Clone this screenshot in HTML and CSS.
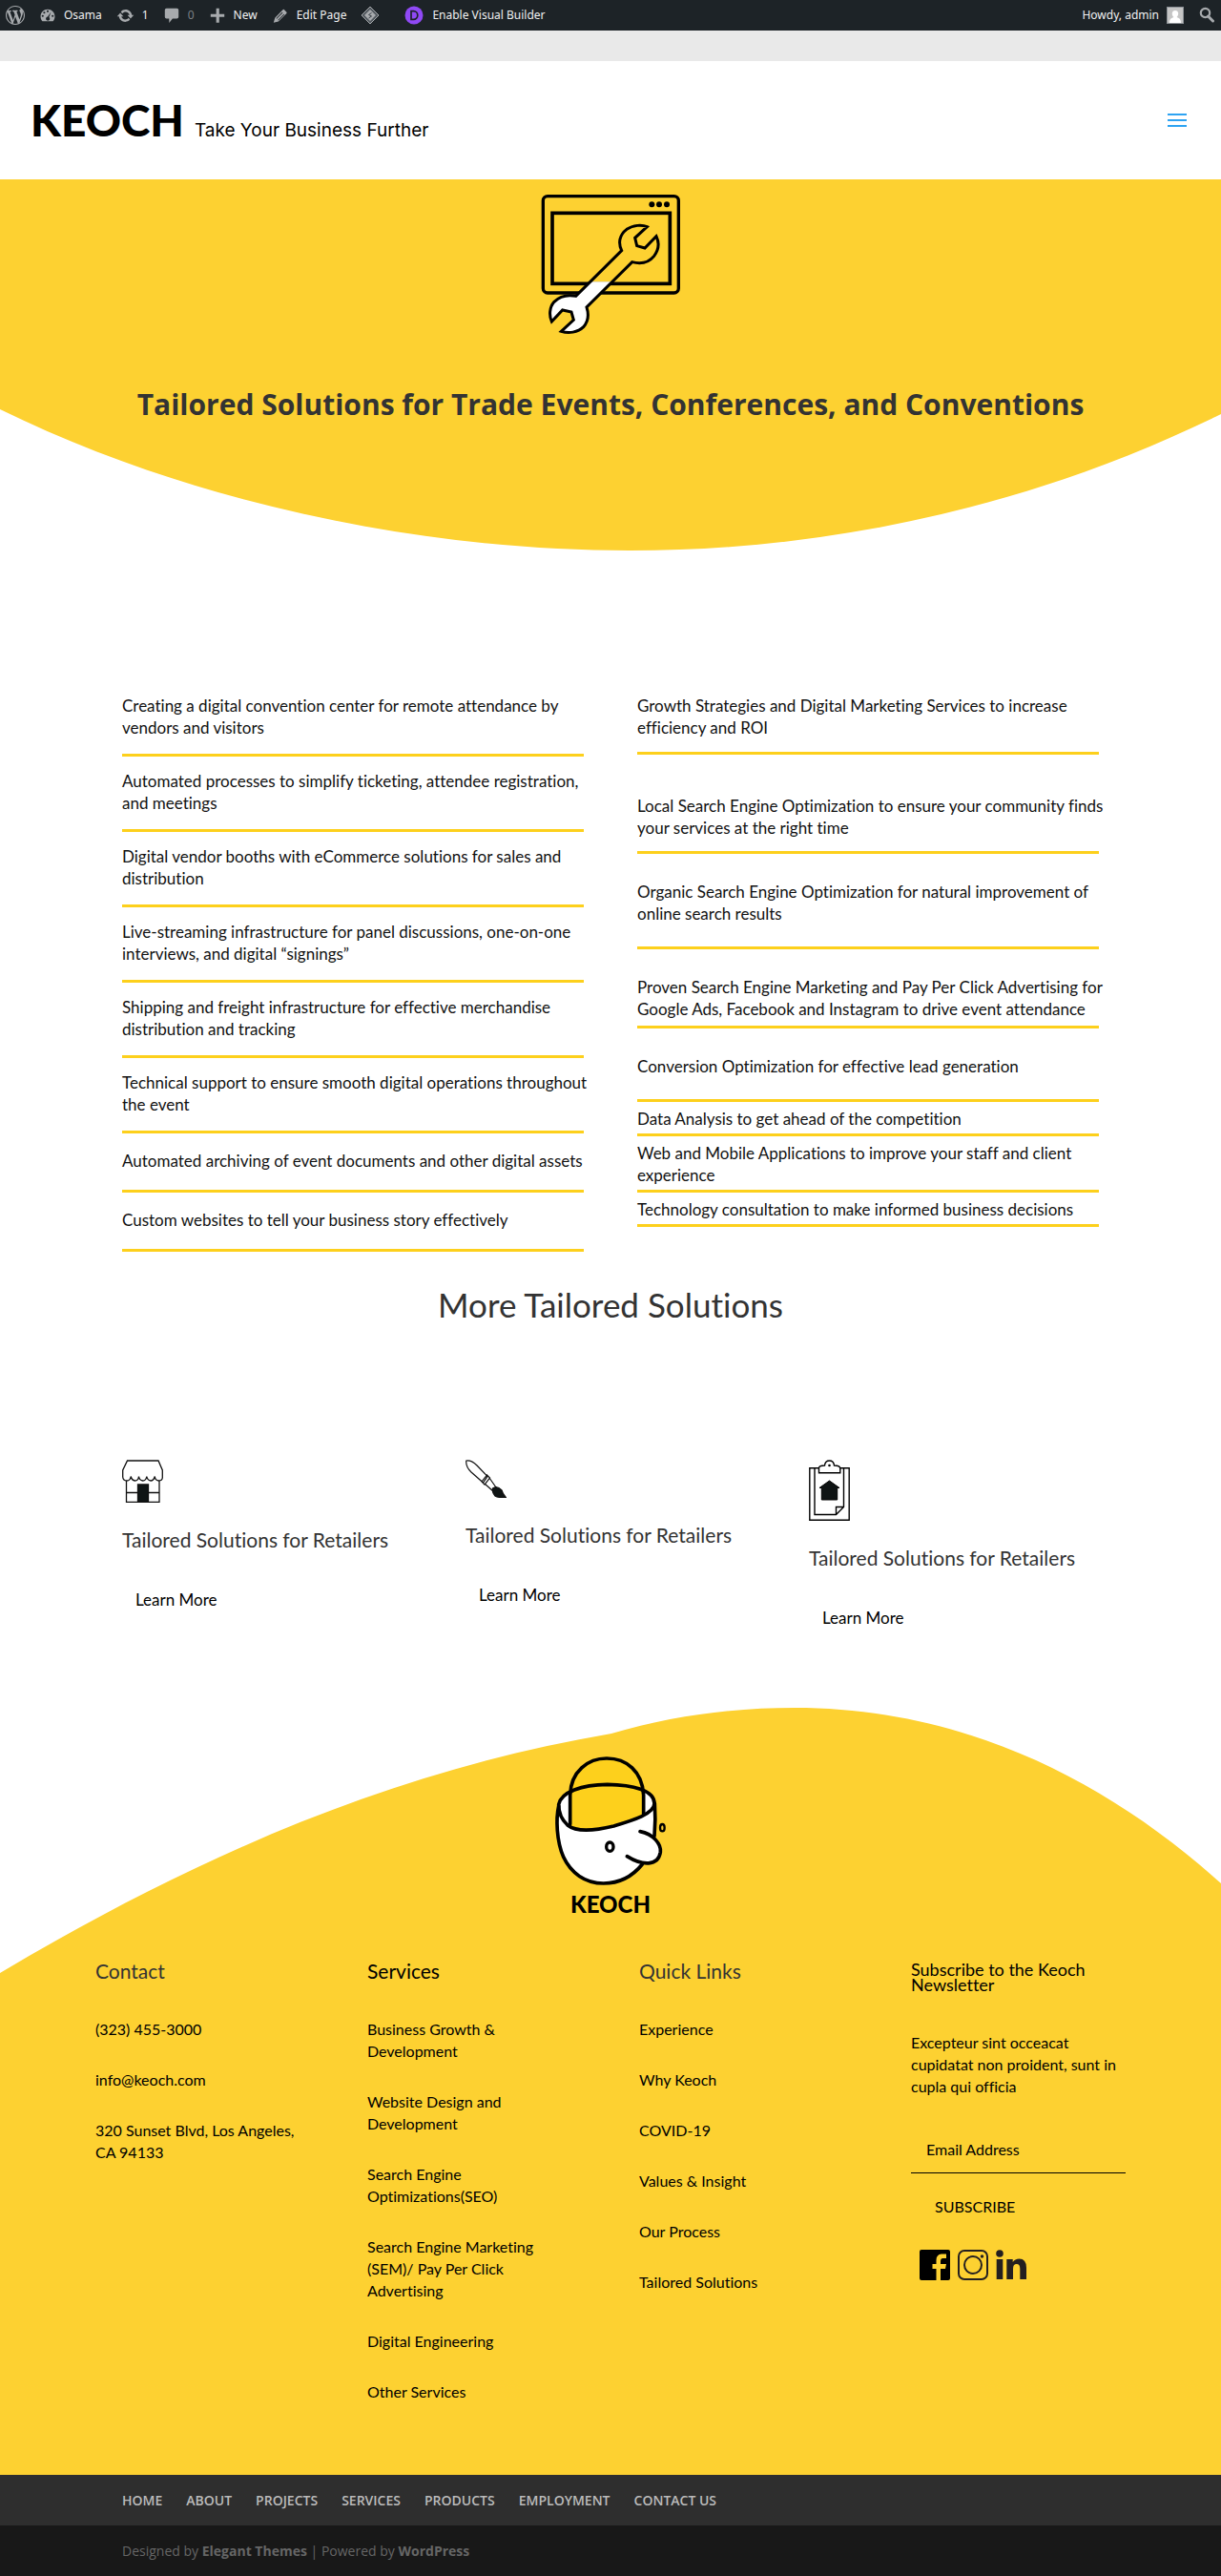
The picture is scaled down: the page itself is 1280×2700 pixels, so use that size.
FILE: index.html
```html
<!DOCTYPE html>
<html lang="en">
<head>
<meta charset="utf-8">
<meta name="viewport" content="width=device-width, initial-scale=1">
<title>Tailored Solutions - Keoch</title>
<link rel="stylesheet" href="styles.css">
</head>
<body>
<div class="adminbar">
  <a href="#" class="ab-item ab-wp" aria-label="About WordPress"><svg width="20" height="20" viewBox="0 0 20 20"><path fill="currentColor" d="M20 10c0-5.51-4.49-10-10-10C4.48 0 0 4.49 0 10c0 5.52 4.48 10 10 10 5.51 0 10-4.48 10-10zM7.78 15.37L4.37 6.22c.55-.02 1.17-.08 1.17-.08.5-.06.44-1.13-.06-1.11 0 0-1.45.11-2.37.11-.18 0-.37 0-.58-.01C4.12 2.69 6.87 1.11 10 1.11c2.33 0 4.45.87 6.05 2.34-.68-.11-1.65.39-1.65 1.58 0 .74.45 1.36.9 2.1.35.61.55 1.36.55 2.46 0 1.49-1.4 5-1.4 5l-3.03-8.37c.54-.02.82-.17.82-.17.5-.05.44-1.25-.06-1.22 0 0-1.44.12-2.38.12-.87 0-2.33-.12-2.33-.12-.5-.03-.56 1.2-.06 1.22l.92.08 1.26 3.41zM17.41 10c.24-.64.74-1.87.43-4.25.7 1.29 1.05 2.71 1.05 4.25 0 3.29-1.73 6.24-4.4 7.78.97-2.59 1.94-5.2 2.92-7.78zM6.1 18.09C3.12 16.65 1.11 13.53 1.11 10c0-1.3.23-2.48.72-3.59C3.25 10.3 4.67 14.2 6.1 18.09zm4.03-6.63l2.58 6.98c-.86.29-1.76.45-2.71.45-.79 0-1.57-.11-2.29-.33.81-2.38 1.62-4.74 2.42-7.1z"/></svg></a>
  <a href="#" class="ab-item"><svg width="18" height="18" viewBox="0 0 20 20"><path fill="currentColor" fill-rule="evenodd" d="M3.8 17h12.4c1.3-1.5 2.1-3.500 2.100-5.600C18.300 6.700 14.600 3 10 3S1.700 6.700 1.700 11.400C1.700 13.500 2.500 15.500 3.800 17zM10 4.200a1.200 1.200 0 1 1 0 2.400a1.200 1.200 0 0 1 0-2.400zM6 5.700a1.200 1.200 0 1 1 0 2.400a1.200 1.200 0 0 1 0-2.400zM4.200 9.600a1.200 1.200 0 1 1 0 2.400a1.200 1.200 0 0 1 0-2.400zM15.800 9.600a1.200 1.200 0 1 1 0 2.400a1.200 1.200 0 0 1 0-2.400zM13.800 6l-2.200 6.200a2.300 2.300 0 1 1-1.600-.5z"/></svg>Osama</a>
  <a href="#" class="ab-item"><svg width="19" height="19" viewBox="0 0 20 20"><path fill="currentColor" d="M10.200 3.280c3.530 0 6.430 2.610 6.920 6h2.080l-3.500 4-3.500-4h2.320c-.45-1.970-2.210-3.450-4.320-3.450-1.450 0-2.730.71-3.540 1.780L4.950 5.660C6.230 4.200 8.110 3.280 10.200 3.280zM9.800 16.720c-3.520 0-6.430-2.610-6.920-6H.8l3.500-4c1.170 1.330 2.330 2.670 3.500 4H5.480c.45 1.970 2.210 3.450 4.320 3.450 1.450 0 2.730-.71 3.540-1.780l1.710 1.950c-1.280 1.460-3.150 2.380-5.250 2.380z"/></svg>1</a>
  <a href="#" class="ab-item ab-dim"><svg width="18" height="18" viewBox="0 0 20 20"><path fill="currentColor" d="M4 2h12a2 2 0 0 1 2 2v8a2 2 0 0 1-2 2h-5l-4 5v-5H4a2 2 0 0 1-2-2V4a2 2 0 0 1 2-2z"/></svg>0</a>
  <a href="#" class="ab-item"><svg width="18" height="18" viewBox="0 0 20 20"><path fill="currentColor" d="M8.500 2h3.500v6.500H18V12h-6v6.500H8.500V12H2V8.500h6.500z"/></svg>New</a>
  <a href="#" class="ab-item"><svg width="18" height="18" viewBox="0 0 20 20"><path fill="currentColor" fill-rule="evenodd" d="M13.900 3.100l3 3c.7.700.7 1.300 0 2l-9.200 9L2 18.500l1.600-5.500 8.900-9.200c.6-.6 1-.8 1.400-.7zM12 6.500l-7 7 .7.700 7-7zM14 8.500l-7 7 .7.700 7-7z"/></svg>Edit Page</a>
  <a href="#" class="ab-item" aria-label="Layouts"><svg width="20" height="20" viewBox="0 0 20 20"><path fill="#50575d" stroke="currentColor" stroke-width="1" d="M10 1l9 9-9 9-9-9z"/><path fill="currentColor" d="M10 4l6 6-6 6-6-6z"/><path d="M11.500 7.500L8.500 9.500l3 1.500-3 2" fill="none" stroke="#3c434a"/></svg></a>
  <a href="#" class="ab-item ab-divi"><svg width="20" height="20" viewBox="0 0 20 20"><circle cx="10" cy="10" r="9.500" fill="#9049f5"/><path d="M7 5.700h2.500a4.300 4.300 0 0 1 0 8.600H7z" fill="none" stroke="#1d2327" stroke-width="1.700"/></svg>Enable Visual Builder</a>
  <a href="#" class="ab-item ab-right">Howdy, admin<svg width="18" height="18" viewBox="0 0 18 18"><path d="M0 0h18v18H0z" fill="#8c9196"/><path d="M1 1h16v16H1z" fill="#c5c5c5"/><path d="M9 4c4 0 4 5 1.500 7C14 12 15 14 15 17H3c0-3 1-5 4.500-6C5 9 5 4 9 4z" fill="#fff"/></svg></a>
  <a href="#" class="ab-item" aria-label="Search"><svg width="18" height="18" viewBox="0 0 18 18" fill="none" stroke="currentColor"><circle cx="7.500" cy="6.500" r="4.700" stroke-width="2.200"/><path d="M10.500 10l5 5" stroke-width="3" stroke-linecap="round"/></svg></a>
</div>
<div class="topstrip"></div>
<header class="site-header">
  <a href="#" class="brand"><span class="wordmark">KEOCH</span><span class="tagline">Take Your Business Further</span></a>
  <button class="menu" aria-label="Menu"><svg width="20" height="14" viewBox="0 0 20 14"><path d="M0 1h20M0 7h20M0 13h20" stroke="#2ea3f2" stroke-width="2"/></svg></button>
</header>
<main>
  <section class="hero">
    <svg class="backdrop" viewBox="0 0 1280 389" preserveAspectRatio="none"><path fill="#fdd131" d="M0 0H1280V246C1090 339 880 389 660 389C440 389 200 339 0 241z"/></svg>
    <svg class="hero-icon" width="147" height="148" viewBox="80 40 441 444" stroke="#000" fill="none">
      <rect x="87" y="48" width="426" height="304" rx="14" stroke-width="10"/>
      <rect x="116" y="101" width="370" height="222" stroke-width="11"/>
      <g fill="#000" stroke="none"><circle cx="429" cy="74" r="9"/><circle cx="452" cy="74" r="9"/><circle cx="476" cy="74" r="9"/></g>
      <path fill="#fdd131" stroke="none" d="M414 144C398 137 370 138 350 152C326 170 323 196 334 219L238 317H302L367 255C395 262 420 256 436 236C452 215 452 193 443 174L407 211L382 204L376 179z"/>
      <path fill="#fff" stroke="none" d="M238 317H302L224 397C231 419 230 441 214 459C196 477 167 480 144 473L183 437L176 412L148 406L114 442C106 424 106 398 122 380C140 362 165 357 190 362z"/>
      <path stroke-width="9" d="M414 144C398 137 370 138 350 152C326 170 323 196 334 219L190 362C165 357 140 362 122 380C106 398 106 424 114 442L148 406L176 412L183 437L144 473C167 480 196 477 214 459C230 441 231 419 224 397L367 255C395 262 420 256 436 236C452 215 452 193 443 174L407 211L382 204L376 179z"/>
    </svg>
    <h1>Tailored Solutions for Trade Events, Conferences, and Conventions</h1>
  </section>
  <section class="lists">
    <ul class="list">
      <li><p>Creating a digital convention center for remote attendance by vendors and visitors</p></li>
      <li><p>Automated processes to simplify ticketing, attendee registration, and meetings</p></li>
      <li><p>Digital vendor booths with eCommerce solutions for sales and distribution</p></li>
      <li><p>Live-streaming infrastructure for panel discussions, one-on-one interviews, and digital “signings”</p></li>
      <li><p>Shipping and freight infrastructure for effective merchandise distribution and tracking</p></li>
      <li><p>Technical support to ensure smooth digital operations throughout the event</p></li>
      <li class="single"><p>Automated archiving of event documents and other digital assets</p></li>
      <li class="single"><p>Custom websites to tell your business story effectively</p></li>
    </ul>
    <ul class="list">
      <li class="snug"><p>Growth Strategies and Digital Marketing Services to increase efficiency and ROI</p></li>
      <li class="spaced"><p>Local Search Engine Optimization to ensure your community finds your services at the right time</p></li>
      <li class="roomy"><p>Organic Search Engine Optimization for natural improvement of online search results</p></li>
      <li class="low"><p>Proven Search Engine Marketing and Pay Per Click Advertising for Google Ads, Facebook and Instagram to drive event attendance</p></li>
      <li class="roomy"><p>Conversion Optimization for effective lead generation</p></li>
      <li class="tight"><p>Data Analysis to get ahead of the competition</p></li>
      <li class="tight"><p>Web and Mobile Applications to improve your staff and client experience</p></li>
      <li class="tight"><p>Technology consultation to make informed business decisions</p></li>
    </ul>
  </section>
  <h2 class="more">More Tailored Solutions</h2>
  <section class="cards">
    <article class="card">
      <svg width="43" height="45" viewBox="0 0 43 45" fill="none" stroke="#111" stroke-width="1.300"><path d="M5.500 1H38L42.300 11V19Q42 22 38.300 22Q34.500 21.500 34.300 17.500Q33 22 30 22Q26.500 21.500 25.800 17.500Q25 22 21.700 22Q18 21.500 17.500 17.500Q17 22 13.500 22Q10 21.500 9.200 17.500Q8.500 22 5 22Q1 22 .7 18V11zM4.500 22V44.300H39V22M4.500 34.500H39"/><path fill="#0f1414" d="M16.500 26H27.500V44H16.500z"/></svg>
      <h3>Tailored Solutions for Retailers</h3><a href="#" class="learn">Learn More</a>
    </article>
    <article class="card">
      <svg width="43" height="40" viewBox="0 0 43 40" fill="none" stroke="#111" stroke-width="1.200"><path d="M.8 1Q6 0 12 6L23 17.500L18.500 24L6 13Q0 7 .8 1zM23 17.500L20.500 21L18.500 24M25 19.500L20.500 25.500M22.500 16L25.500 19L20 26L17 23zM25 19L32 29M20.500 25.500L29 33"/><path fill="#0f1414" d="M28.500 30Q33 26.500 38 32Q39 36 42.300 39.500Q34 40 31 38Q27.500 34 28.500 30z"/></svg>
      <h3>Tailored Solutions for Retailers</h3><a href="#" class="learn">Learn More</a>
    </article>
    <article class="card">
      <svg width="43" height="64" viewBox="0 0 43 64" fill="none" stroke="#000" stroke-width="1.400"><path d="M.8 8.700H42.200V63.300H.8zM6 8.700V57.500H28.500L36.500 49.500V8.700M28.500 57.500V49.500H36.500"/><path fill="#fff" d="M10.500 13.700V8.500Q11 6 16.500 6Q17 1 21.500 1Q26 1 26.500 6Q32 6 32.800 8.500V13.700z"/><circle cx="21.500" cy="6" r=".6"/><path fill="#0f1414" stroke-width="1" d="M21.500 22L32 29.500H29.700V42H13.300V29.500H11z"/></svg>
      <h3>Tailored Solutions for Retailers</h3><a href="#" class="learn">Learn More</a>
    </article>
  </section>
</main>
<footer>
  <section class="footer-main">
    <svg class="backdrop" viewBox="0 0 1280 804" preserveAspectRatio="none"><path fill="#fdd131" d="M0 278C190 165 400 68 641 27C705 8 770 0 833 0C1010 0 1160 76 1280 184V804H0z"/></svg>
    <a href="#" class="footer-logo">
      <svg width="120" height="140" viewBox="60 55 360 420" fill="none" stroke="#000" stroke-width="11" stroke-linecap="round" stroke-linejoin="round">
        <path fill="#fff" d="M77 215C68 260 70 330 92 380C115 430 160 463 218 463C270 463 310 440 342 401L382 396L398 350L378 318C382 280 381 240 379 212C365 165 300 153 230 152C150 153 85 175 77 215z" stroke="none"/>
        <path fill="#fdd01c" stroke="none" d="M113 283V185C115 110 170 70 228 70C290 70 340 110 344 185V249C310 265 260 283 210 292C165 298 135 296 113 283z"/>
        <path d="M113 277V185C115 110 170 70 228 70C290 70 340 110 344 185V245"/>
        <path d="M77 215C85 175 150 153 230 152C310 153 378 170 378 212C378 245 310 265 250 283C180 300 130 300 105 280C85 262 77 240 77 215z"/>
        <path d="M77 220C68 260 70 330 92 380C115 430 160 463 218 463C270 463 310 440 340 403M379 212C381 240 381 280 378 314"/>
        <path fill="#fff" d="M333 300C375 308 400 340 397 365C390 410 340 408 292 378"/>
        <ellipse cx="238" cy="348" rx="11" ry="14" stroke-width="10"/><ellipse cx="403" cy="288" rx="7" ry="11" stroke-width="7"/>
      </svg>
      <span class="footer-word">KEOCH</span>
    </a>
    <div class="columns">
      <div class="column"><h4>Contact</h4>
        <ul><li><a href="#">(323) 455-3000</a></li><li><a href="#">info@keoch.com</a></li><li>320 Sunset Blvd, Los Angeles, CA 94133</li></ul></div>
      <div class="column"><h4 class="dark">Services</h4>
        <ul class="narrow"><li><a href="#">Business Growth &amp; Development</a></li><li><a href="#">Website Design and Development</a></li><li><a href="#">Search Engine Optimizations(SEO)</a></li><li><a href="#">Search Engine Marketing (SEM)/ Pay Per Click Advertising</a></li><li><a href="#">Digital Engineering</a></li><li><a href="#">Other Services</a></li></ul></div>
      <div class="column"><h4>Quick Links</h4>
        <ul><li><a href="#">Experience</a></li><li><a href="#">Why Keoch</a></li><li><a href="#">COVID-19</a></li><li><a href="#">Values &amp; Insight</a></li><li><a href="#">Our Process</a></li><li><a href="#">Tailored Solutions</a></li></ul></div>
      <form class="column"><h4 class="subhead">Subscribe to the Keoch Newsletter</h4>
        <p>Excepteur sint occeacat cupidatat non proident, sunt in cupla qui officia</p>
        <input type="email" aria-label="Email Address" placeholder="Email Address">
        <button type="button" class="subscribe">SUBSCRIBE</button>
        <div class="social">
          <a href="#" aria-label="Facebook"><svg width="32" height="32" viewBox="0 0 32 32"><path d="M2 0H30a2 2 0 0 1 2 2V30a2 2 0 0 1-2 2H22V20H27L28 15H22V12Q22 9 24.500 9H28V4.500H23Q17.500 5 17.500 11V15H13.500V20H17.500V32H2a2 2 0 0 1-2-2V2a2 2 0 0 1 2-2z"/></svg></a>
          <a href="#" aria-label="Instagram"><svg width="32" height="32" viewBox="0 0 32 32" fill="none" stroke="#231f20" stroke-width="2"><rect x="1" y="1" width="30" height="30" rx="6"/><circle cx="16" cy="16" r="9"/><circle cx="25.500" cy="7" r="1" fill="#231f20" stroke-width="1.500"/></svg></a>
          <a href="#" aria-label="LinkedIn"><svg width="32" height="32" viewBox="0 0 32 32" fill="#231f20"><circle cx="4" cy="4" r="3.800"/><path d="M.7 10H7.300V31H.7zM11.300 10H17.700V13Q20 9.500 24.500 9.500Q32 9.500 32 19V31H25.300V20Q25.300 15 21.700 15Q18 15 18 20V31H11.300z"/></svg></a>
        </div></form>
    </div>
  </section>
  <nav class="bottom-nav"><a href="#">HOME</a><a href="#">ABOUT</a><a href="#">PROJECTS</a><a href="#">SERVICES</a><a href="#">PRODUCTS</a><a href="#">EMPLOYMENT</a><a href="#">CONTACT US</a></nav>
  <div class="credits">Designed by <a href="#">Elegant Themes</a> | Powered by <a href="#">WordPress</a></div>
</footer>
</body>
</html>
```
FILE: styles.css
```css
* { box-sizing: border-box; }
body { margin: 0; background: #fff; color: #111; font: 16px/23px Lato, "Open Sans", sans-serif; font-variant-ligatures: none; }
a { color: inherit; text-decoration: none; }
ul { list-style: none; margin: 0; padding: 0; }
h1, h2, h3, h4, p { margin: 0; font-weight: 400; }
svg { display: block; flex: none; }
button, input { font: inherit; color: inherit; background: none; border: 0; border-radius: 0; }

.adminbar { display: flex; align-items: center; gap: 15px; height: 32px; padding: 0 6px; background: #1d2327; color: #f0f0f1; font: 12px/32px "Noto Sans", sans-serif; }
.ab-item { display: flex; align-items: center; gap: 8px; }
.ab-item svg { color: #a7aaad; }
.ab-dim { color: #7c8186; }
.ab-divi { margin-left: 11px; gap: 9px; }
.ab-right { margin-left: auto; }
.topstrip { height: 32px; background: #e9e9e9; }

.site-header { display: flex; align-items: center; justify-content: space-between; height: 124px; padding: 0 36px 0 32px; }
.brand { display: flex; align-items: baseline; gap: 11px; color: #000; }
.wordmark { font-size: 46px; line-height: 56px; font-weight: 900; }
.tagline { font-family: Inter, sans-serif; font-size: 19px; }
.menu { padding: 0; cursor: pointer; }

.hero { position: relative; display: flex; flex-direction: column; align-items: center; gap: 53px; padding: 15px 24px 133px; text-align: center; }
.backdrop { position: absolute; inset: 0; width: 100%; height: 100%; }
.hero-icon, .hero h1 { position: relative; }
.hero h1 { color: #333; font: 700 30px/40px "Open Sans", sans-serif; }

.lists, .more, .cards { width: 80%; margin: 0 auto; }
.lists { display: grid; grid-template-columns: 1fr 1fr; gap: 56px; align-items: start; padding-top: 137px; }
.list { font-size: 17px; }
.list li { padding: 14px 0 16px; border-bottom: 3px solid #fdd01c; }
.list p { margin-right: -12px; }
.list .single { padding: 17px 0 19px; }
.list .snug { padding-bottom: 14px; }
.list .spaced { padding: 42px 0 13px; }
.list .roomy { padding: 28px 0 23px; }
.list .low { padding: 28px 0 6px; }
.list .tight { padding: 6px 0 4px; }
.more { padding-top: 35px; text-align: center; color: #333; font-size: 35px; line-height: 40px; }
.cards { display: grid; grid-template-columns: repeat(3, 1fr); gap: 56px; align-items: start; padding-top: 143px; color: #000; }
.card h3 { margin-top: 29px; color: #333; font-size: 21px; line-height: 20px; }
.learn { display: inline-block; margin-top: 32px; padding: 9px 14px; font-size: 17px; }

.footer-main { position: relative; margin-top: 74px; padding: 48px 100px 76px; color: #000; }
.footer-logo { position: relative; display: flex; flex-direction: column; align-items: center; width: 120px; margin: 0 auto; }
.footer-word { font-size: 24px; line-height: 36px; font-weight: 900; }
.columns { position: relative; display: grid; grid-template-columns: repeat(4, 1fr); gap: 60px; margin-top: 42px; }
.column h4 { color: #333; font-size: 21px; line-height: 20px; }
.column .dark { color: #000; }
.column .subhead { color: #000; font-size: 18px; line-height: 16px; }
.column ul { display: grid; gap: 30px; margin-top: 39px; }
.column .narrow { padding-right: 36px; }
.column p { margin-top: 41px; }
.column input { display: block; width: 100%; height: 51px; margin-top: 29px; padding: 0 16px; border-bottom: 1px solid #000; outline: 0; }
.column input::placeholder { color: #000; opacity: 1; }
.subscribe { display: block; margin-top: 15px; padding: 8px 25px; cursor: pointer; }
.social { display: flex; gap: 8px; margin: 26px 0 0 9px; }

.bottom-nav { display: flex; gap: 25px; padding: 15px 10%; background: #2e2e2e; color: #bbb; font: 600 14px/23px "Open Sans", sans-serif; }
.credits { padding: 15px 10%; background: #181818; color: #666; font: 14px/23px "Open Sans", sans-serif; }
.credits a { font-weight: 700; }
```
